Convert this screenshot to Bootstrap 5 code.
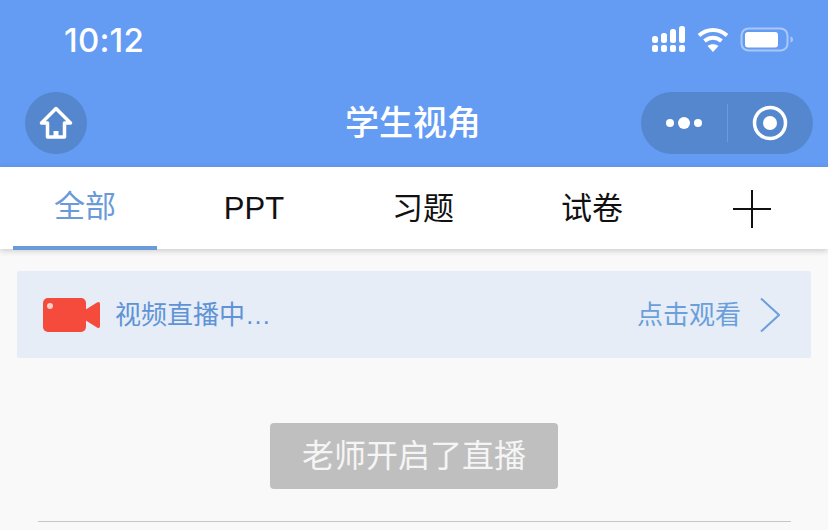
<!DOCTYPE html>
<html lang="zh">
  <head>
    <meta charset="UTF-8" />
    <meta name="viewport" content="width=device-width, initial-scale=1.0" />
    <title>学生视角</title>
    <link
      rel="stylesheet"
      href="https://cdn.jsdelivr.net/npm/bootstrap@5.3.3/dist/css/bootstrap.min.css"
    />
    <script src="https://cdn.jsdelivr.net/npm/bootstrap@5.3.3/dist/js/bootstrap.bundle.min.js"></script>
    <style>
      html, body { height: 530px; overflow: hidden; }
      body {
        background: #f9f9f9;
        font-family: "Liberation Sans", "Noto Sans CJK SC", sans-serif;
      }
      .top-head { height: 167px; background: #649bf3; color: #fff; }
      .status-row { height: 92px; padding: 0 34px 14px 64px; }
      .clock { font-family: Inter, "Liberation Sans", sans-serif; font-size: 33px; font-weight: 500; line-height: 1; letter-spacing: 0.2px; margin-top: 2px; }
      .status-icons { gap: 11px; }
      .nav-row { height: 62px; padding: 0 15px 0 25px; display: grid; grid-template-columns: 172px 1fr 172px; align-items: center; }
      .home-btn { width: 62px; height: 62px; border-radius: 50%; background: #5587cf; }
      .head-title { font-size: 34px; font-weight: 500; line-height: 1; padding-right: 12px; text-align: center; }
      .capsule { width: 172px; height: 62px; border-radius: 31px; background: #5587cf; }
      .capsule-part { width: 86px; }
      .capsule-sep { width: 1px; height: 38px; background: #6c9ae0; }
      .tab-bar { height: 82px; background: #fff; padding-left: 13px; box-shadow: 0 2px 6px rgba(0, 0, 0, .18); position: relative; }
      .tab-item { width: 144px; margin-right: 25px; height: 83px; font-size: 31px; color: #111; line-height: 1; }
      .tab-item.on { color: #6b9ad8; border-bottom: 4px solid #6b9ad8; }
      .tab-plus { margin-left: 44px; margin-top: 23px; }
      .live-box { margin: 22px 17px 0; height: 87px; background: #e6edf6; border-radius: 2px; padding: 0 31px 0 26px; color: #5f93d6; font-size: 26px; }
      .live-text { margin-left: 6px; }
      .live-link { color: #6a9fdc; }
      .live-chevron { margin-left: 19px; }
      .start-btn { width: 288px; height: 66px; margin-top: 65px; background: #bfbfbf; color: #f5f5f5; font-size: 32px; border-radius: 4px; line-height: 1; }
      .rule-line { margin: 32px 37px 0 38px; border-top: 1px solid #c6c6c6; }
    </style>
  </head>
  <body>
    <header class="top-head">
      <div class="status-row d-flex align-items-center justify-content-between">
        <span class="clock">10:12</span>
        <div class="status-icons d-flex align-items-center">
          <svg width="34" height="26" viewBox="0 0 34 26" fill="#fff">
            <rect x="0" y="10" width="6" height="7" rx="2.500"/><rect x="0" y="19" width="6" height="7" rx="2"/>
            <rect x="9" y="7" width="6" height="10" rx="2.500"/><rect x="9" y="19" width="6" height="7" rx="2"/>
            <rect x="18" y="3" width="6" height="14" rx="2.500"/><rect x="18" y="19" width="6" height="7" rx="2"/>
            <rect x="27" y="0" width="6" height="17" rx="2.500"/><rect x="27" y="19" width="6" height="7" rx="2"/>
          </svg>
          <svg width="32" height="26" viewBox="0 0 32 26" fill="none" stroke="#fff" stroke-width="4">
            <path d="M2 9.500C10 2 22 2 30 9.500"/>
            <path d="M7.500 15C12.500 10.500 19.500 10.500 24.500 15"/>
            <path d="M16 26l-5.500-6C13.500 17.500 18.500 17.500 21.500 20z" fill="#fff" stroke="none"/>
          </svg>
          <svg width="54" height="28" viewBox="0 0 54 28" fill="none">
            <rect x="1.500" y="3.500" width="46" height="22" rx="7" stroke="#a9c8f8" stroke-width="2"/>
            <rect x="5" y="7" width="33" height="15.500" rx="3" fill="#fff"/>
            <path d="M50.500 11.500c2 .5 2.500 1.500 2.500 3s-.5 2.500-2.500 3z" fill="#a9c8f8"/>
          </svg>
        </div>
      </div>
      <div class="nav-row">
        <div class="home-btn d-flex align-items-center justify-content-center">
          <svg width="36" height="34" viewBox="0 0 36 34" fill="none" stroke="#fff" stroke-width="3.500" stroke-linejoin="round">
            <path d="M18 2.500L3.500 17H9.500V31H26.500V17H32.500z"/>
            <path d="M18 31V25" stroke-width="5"/>
          </svg>
        </div>
        <div class="head-title">学生视角</div>
        <div class="capsule d-flex align-items-center">
          <div class="capsule-part d-flex justify-content-center">
            <svg width="38" height="16" viewBox="0 0 38 16" fill="#fff">
              <circle cx="5" cy="8" r="4"/><circle cx="19" cy="8" r="6"/><circle cx="33" cy="8" r="4"/>
            </svg>
          </div>
          <div class="capsule-sep"></div>
          <div class="capsule-part d-flex justify-content-center">
            <svg width="36" height="36" viewBox="0 0 36 36">
              <circle cx="18" cy="18" r="15.500" fill="none" stroke="#fff" stroke-width="3.500"/>
              <circle cx="18" cy="18" r="7" fill="#fff"/>
            </svg>
          </div>
        </div>
      </div>
    </header>

    <nav class="tab-bar d-flex">
      <div class="tab-item on d-flex align-items-center justify-content-center">全部</div>
      <div class="tab-item d-flex align-items-center justify-content-center">PPT</div>
      <div class="tab-item d-flex align-items-center justify-content-center">习题</div>
      <div class="tab-item d-flex align-items-center justify-content-center">试卷</div>
      <svg class="tab-plus" width="38" height="38" viewBox="0 0 38 38" stroke="#111" stroke-width="2">
        <path d="M0 19H38M19 0V38"/>
      </svg>
    </nav>

    <section class="live-box d-flex align-items-center justify-content-between">
      <div class="d-flex align-items-center gap-2">
        <svg width="58" height="34" viewBox="0 0 58 34">
          <path d="M5 0H38a5 5 0 0 1 5 5V29a5 5 0 0 1-5 5H5a5 5 0 0 1-5-5V5a5 5 0 0 1 5-5z" fill="#f44b3c"/>
          <path d="M42 12L54 4.500Q57 3 57 6V28q0 3-3 1.500L42 22z" fill="#f44b3c"/>
          <circle cx="7" cy="8" r="3" fill="#fbd0c8"/>
        </svg>
        <span class="live-text lh-1">视频直播中…</span>
      </div>
      <div class="d-flex align-items-center live-link">
        <span class="lh-1">点击观看</span>
        <svg class="live-chevron" width="20" height="36" viewBox="0 0 20 36" fill="none" stroke="#6a9fdc" stroke-width="2">
          <path d="M1 1.500L19 18L1 34.500"/>
        </svg>
      </div>
    </section>

    <div class="d-flex justify-content-center">
      <div class="start-btn d-flex align-items-center justify-content-center">老师开启了直播</div>
    </div>
    <div class="rule-line"></div>
  </body>
</html>
